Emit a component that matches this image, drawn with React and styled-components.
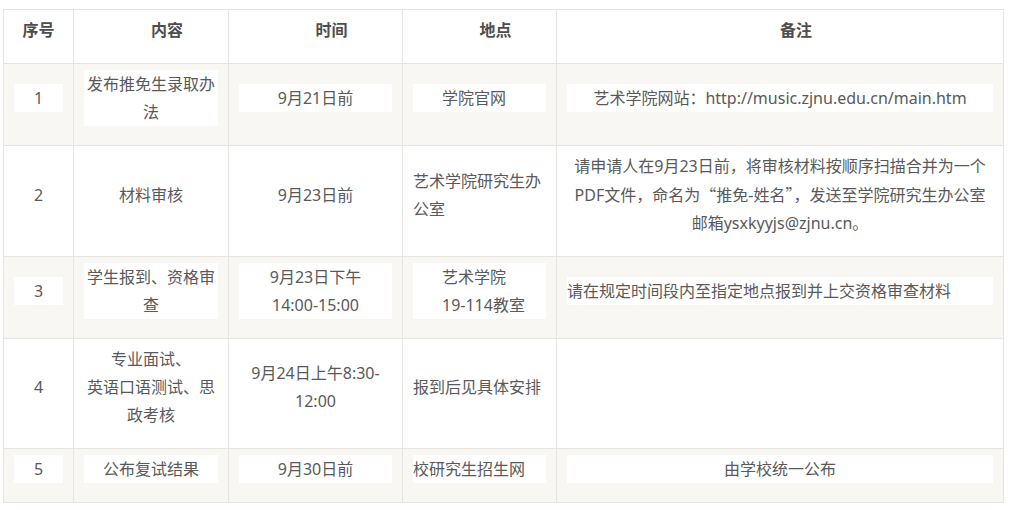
import React from "react";
import styled, { createGlobalStyle } from "styled-components";

const GlobalStyle = createGlobalStyle`
    html, body {
        margin: 0;
        padding: 0;
        background: #ffffff;
    }
    body {
        font-family: "Noto Sans", "Noto Sans CJK SC", sans-serif;
        font-size: 16px;
        color: #595959;
    }
`;

const App = () => {
    return (
        <Page>
            <GlobalStyle />
            <Table>
                <colgroup>
                    <col style={{ width: 70 }} />
                    <col style={{ width: 155 }} />
                    <col style={{ width: 174 }} />
                    <col style={{ width: 154 }} />
                    <col style={{ width: 447 }} />
                </colgroup>
                <thead>
                    <Row>
                        <Th>
                            <Text>序号</Text>
                        </Th>
                        <Th $indent>
                            <Text>内容</Text>
                        </Th>
                        <Th $indent>
                            <Text>时间</Text>
                        </Th>
                        <Th $indent>
                            <Text>地点</Text>
                        </Th>
                        <Th $indent>
                            <Text>备注</Text>
                        </Th>
                    </Row>
                </thead>
                <tbody>
                    <Row $shaded>
                        <Td>
                            <Text>1</Text>
                        </Td>
                        <Td>
                            <Text>
                                发布推免生录取办
                                <br />法
                            </Text>
                        </Td>
                        <Td>
                            <Text>9月21日前</Text>
                        </Td>
                        <Td>
                            <Text $align="left" $pad={29}>
                                学院官网
                            </Text>
                        </Td>
                        <Td>
                            <Text>艺术学院网站：http://music.zjnu.edu.cn/main.htm</Text>
                        </Td>
                    </Row>
                    <Row>
                        <Td>
                            <Text>2</Text>
                        </Td>
                        <Td>
                            <Text>材料审核</Text>
                        </Td>
                        <Td>
                            <Text>9月23日前</Text>
                        </Td>
                        <Td>
                            <Text $align="left">
                                艺术学院研究生办
                                <br />
                                公室
                            </Text>
                        </Td>
                        <Td>
                            <Text $tight>
                                请申请人在9月23日前，将审核材料按顺序扫描合并为一个
                                <br />
                                PDF文件，命名为<Cjk>“</Cjk>推免-姓名<Cjk>”</Cjk>，发送至学院研究生办公室
                                <br />
                                邮箱ysxkyyjs@zjnu.cn。
                            </Text>
                        </Td>
                    </Row>
                    <Row $shaded>
                        <Td>
                            <Text>3</Text>
                        </Td>
                        <Td>
                            <Text>
                                学生报到、资格审
                                <br />查
                            </Text>
                        </Td>
                        <Td>
                            <Text>
                                9月23日下午
                                <br />
                                14:00-15:00
                            </Text>
                        </Td>
                        <Td>
                            <Text $align="left" $pad={29}>
                                艺术学院
                                <br />
                                19-114教室
                            </Text>
                        </Td>
                        <Td>
                            <Text $align="left">请在规定时间段内至指定地点报到并上交资格审查材料</Text>
                        </Td>
                    </Row>
                    <Row>
                        <Td>
                            <Text>4</Text>
                        </Td>
                        <Td>
                            <Text>
                                专业面试、
                                <br />
                                英语口语测试、思
                                <br />
                                政考核
                            </Text>
                        </Td>
                        <Td>
                            <Text>
                                9月24日上午8:30-
                                <br />
                                12:00
                            </Text>
                        </Td>
                        <Td>
                            <Text $align="left">报到后见具体安排</Text>
                        </Td>
                        <Td />
                    </Row>
                    <Row $shaded>
                        <Td>
                            <Text>5</Text>
                        </Td>
                        <Td>
                            <Text>公布复试结果</Text>
                        </Td>
                        <Td>
                            <Text>9月30日前</Text>
                        </Td>
                        <Td>
                            <Text $align="left">校研究生招生网</Text>
                        </Td>
                        <Td>
                            <Text>由学校统一公布</Text>
                        </Td>
                    </Row>
                </tbody>
            </Table>
        </Page>
    );
};

const Page = styled.div`
    padding: 9px 0 0 3px;
`;

const Table = styled.table`
    width: 1000px;
    table-layout: fixed;
    border-collapse: collapse;
    border: 1px solid #e6e4e1;
`;

const Row = styled.tr`
    background: ${(p) => (p.$shaded ? "#f9f7f4" : "#ffffff")};
`;

const Td = styled.td`
    border: 1px solid #e6e4e1;
    padding: 6px 10px 5px;
    vertical-align: middle;
    text-align: center;
`;

const Th = styled(Td).attrs({ as: "th" })`
    font-weight: bold;
    color: #4d4d4d;
    text-indent: ${(p) => (p.$indent ? "2em" : "0")};
`;

const Text = styled.p`
    margin: 0 0 14px;
    line-height: 28px;
    background: #ffffff;
    text-align: ${(p) => p.$align || "center"};
    padding-left: ${(p) => (p.$pad ? `${p.$pad}px` : "0")};
    white-space: ${(p) => (p.$tight ? "nowrap" : "normal")};
    overflow: hidden;
`;

const Cjk = styled.span`
    font-family: "Noto Sans CJK SC", sans-serif;
`;

export default App;
